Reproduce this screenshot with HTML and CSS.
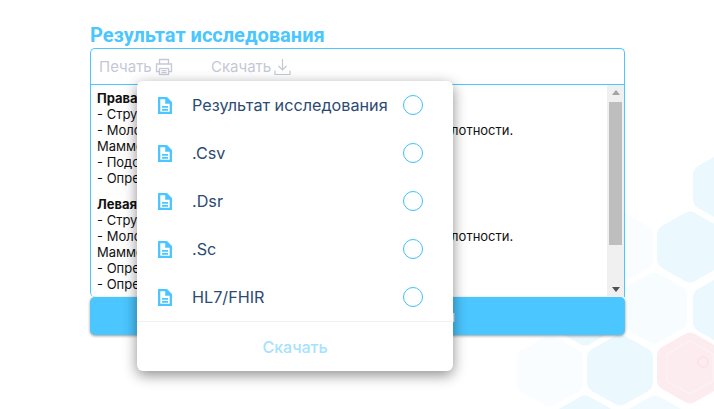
FILE: index.html
```html
<!DOCTYPE html>
<html lang="ru">
<head>
    <meta charset="UTF-8">
    <meta name="viewport" content="width=device-width, initial-scale=1.0">
    <title>Результат исследования</title>
    <link rel="stylesheet" href="styles.css">
</head>
<body>
    <!-- honeycomb in the corner -->
    <svg class="honeycomb" width="714" height="409" viewBox="0 0 714 409">
        <defs>
            <path id="hex" d="M-5 -34 Q0 -37 5 -34 L28 -21 Q33 -18 33 -12 L33 12 Q33 18 28 21 L5 34 Q0 37 -5 34 L-28 21 Q-33 18 -33 12 L-33 -12 Q-33 -18 -28 -21 Z"/>
        </defs>
        <use href="#hex" x="726" y="187" fill="#ebf8fe"/>
        <use href="#hex" x="620" y="247" fill="#f9fdff"/>
        <use href="#hex" x="690" y="247" fill="#ebf8fe"/>
        <use href="#hex" x="585" y="310" fill="#ebf8fe"/>
        <use href="#hex" x="654" y="308" fill="#f7fcff"/>
        <use href="#hex" x="726" y="310" fill="#ebf8fe"/>
        <use href="#hex" x="550" y="371" fill="#f9fdff"/>
        <use href="#hex" x="620" y="370" fill="#ebf8fe"/>
        <use href="#hex" x="690" y="368" fill="#fdecef"/>
        <path d="M690 341 L713 354 L713 381 L690 394 L667 381 L667 354 Z" fill="none" stroke="#fdf0f2" stroke-width="2"/>
        <circle cx="703" cy="362" r="5" fill="none" stroke="#fbe3e6" stroke-width="2"/>
        <use href="#hex" x="585" y="431" fill="#ebf8fe"/>
        <use href="#hex" x="655" y="431" fill="#f1faff"/>
    </svg>

    <div class="page">
        <h1 class="title">Результат исследования</h1>
        <div class="result-box">
            <div class="toolbar">
                <span class="tool tool-print">Печать
                    <svg width="18" height="18" viewBox="0 0 18 18" fill="none" stroke="#c5c8d6" stroke-width="1.3">
                        <path d="M4.5 6V1.500h9V6"/>
                        <path d="M4.5 13.500H1.500V6h15v7.500h-3"/>
                        <rect x="4.5" y="10.5" width="9" height="6"/>
                        <path d="M6.500 12.700h5M6.500 14.600h5"/>
                    </svg>
                </span>
                <span class="tool">Скачать
                    <svg width="17" height="18" viewBox="0 0 17 18" fill="none" stroke="#c5c8d6" stroke-width="1.2">
                        <path d="M8.500 1v11M4.500 8l4 4 4-4"/>
                        <path d="M1 12.500v4h15v-4"/>
                    </svg>
                </span>
            </div>
            <div class="report">
                <div class="report-text">
                    <p><b>Правая молочная железа</b><br>
                    - Структура без особенностей.<br>
                    - Молочная железа представлена тканью умеренной плотности.<br>
                    Маммографически без изменений.<br>
                    - Подозрительных образований нет.<br>
                    - Определяются единичные кальцинаты.</p>
                    <p><b>Левая молочная железа</b><br>
                    - Структура без особенностей.<br>
                    - Молочная железа представлена тканью умеренной плотности.<br>
                    Маммографически без изменений.<br>
                    - Определяются единичные кисты.<br>
                    - Определяются единичные кальцинаты.</p>
                </div>
                <div class="scrollbar">
                    <span class="arrow arrow-up"></span>
                    <div class="track"><div class="thumb"></div></div>
                    <span class="arrow arrow-down"></span>
                </div>
            </div>
        </div>
        <button class="main-btn" type="button">Завершить исследования</button>
    </div>

    <div class="modal">
        <ul class="formats">
            <li class="format">
                <svg class="doc" width="14" height="17" viewBox="0 0 14 17"><path fill-rule="evenodd" fill="#4bc6ff" d="M0 0h9l5 5v12H0ZM2.300 2.300v12.400h9.400V6.800H7.200V2.300ZM4 9h6v1.700H4ZM4 12h6v1.700H4Z"/></svg>
                <span class="format-name">Результат исследования</span>
                <span class="radio"></span>
            </li>
            <li class="format">
                <svg class="doc" width="14" height="17" viewBox="0 0 14 17"><path fill-rule="evenodd" fill="#4bc6ff" d="M0 0h9l5 5v12H0ZM2.300 2.300v12.400h9.400V6.800H7.200V2.300ZM4 9h6v1.700H4ZM4 12h6v1.700H4Z"/></svg>
                <span class="format-name">.Csv</span>
                <span class="radio"></span>
            </li>
            <li class="format">
                <svg class="doc" width="14" height="17" viewBox="0 0 14 17"><path fill-rule="evenodd" fill="#4bc6ff" d="M0 0h9l5 5v12H0ZM2.300 2.300v12.400h9.400V6.800H7.200V2.300ZM4 9h6v1.700H4ZM4 12h6v1.700H4Z"/></svg>
                <span class="format-name">.Dsr</span>
                <span class="radio"></span>
            </li>
            <li class="format">
                <svg class="doc" width="14" height="17" viewBox="0 0 14 17"><path fill-rule="evenodd" fill="#4bc6ff" d="M0 0h9l5 5v12H0ZM2.300 2.300v12.400h9.400V6.800H7.200V2.300ZM4 9h6v1.700H4ZM4 12h6v1.700H4Z"/></svg>
                <span class="format-name">.Sc</span>
                <span class="radio"></span>
            </li>
            <li class="format">
                <svg class="doc" width="14" height="17" viewBox="0 0 14 17"><path fill-rule="evenodd" fill="#4bc6ff" d="M0 0h9l5 5v12H0ZM2.300 2.300v12.400h9.400V6.800H7.200V2.300ZM4 9h6v1.700H4ZM4 12h6v1.700H4Z"/></svg>
                <span class="format-name">HL7/FHIR</span>
                <span class="radio"></span>
            </li>
        </ul>
        <div class="modal-footer">Скачать</div>
    </div>
</body>
</html>
```

FILE: styles.css
```css
html, body {
    height: 100%;
}
body {
    font-family: Roboto, sans-serif;
    margin: 0;
    padding: 0;
    background-color: #fff;
    overflow: hidden;
}
.honeycomb {
    position: absolute;
    top: 0;
    left: 0;
}
.page {
    position: relative;
    width: 535px;
    margin-left: 90px;
    padding-top: 24px;
}
.title {
    margin: 0;
    font-size: 20px;
    line-height: 22px;
    font-weight: 700;
    color: #4bc6ff;
    padding-bottom: 2px;
}
.result-box {
    height: 249px;
    background-color: #fff;
    border: 1px solid #4bc6ff;
    border-bottom: 0;
    border-radius: 5px 5px 0 5px;
    box-sizing: border-box;
    display: flex;
    flex-direction: column;
}
.toolbar {
    height: 35px;
    flex: none;
    display: flex;
    align-items: center;
    padding-left: 8px;
    border-bottom: 1px solid #4bc6ff;
}
.tool {
    display: flex;
    align-items: center;
    gap: 3px;
    font-family: Inter, sans-serif;
    font-size: 15px;
    color: #c5c8d6;
}
.tool-print {
    width: 112px;
}
.report {
    flex: 1;
    display: flex;
    min-height: 0;
}
.report-text {
    flex: 1;
    padding: 5px 6px;
    font-family: Inter, sans-serif;
    font-size: 13px;
    line-height: 16px;
    color: #111;
    white-space: nowrap;
    overflow: hidden;
}
.report-text p {
    margin: 0 0 10px;
}
.scrollbar {
    width: 17px;
    flex: none;
    background-color: #f0f0f0;
    display: flex;
    flex-direction: column;
    align-items: center;
}
.track {
    flex: 1;
    width: 100%;
    padding: 2px 2px 0;
    box-sizing: border-box;
}
.thumb {
    height: 143px;
    background-color: #bebebe;
}
.arrow {
    flex: none;
    width: 0;
    height: 0;
    margin: 5px 0;
    border-left: 4px solid transparent;
    border-right: 4px solid transparent;
}
.arrow-up {
    border-bottom: 5px solid #a3a3a3;
}
.arrow-down {
    border-top: 5px solid #505050;
}
.main-btn {
    display: block;
    width: 100%;
    height: 38px;
    background-color: #4bc6ff;
    color: #fff;
    font-family: Roboto, sans-serif;
    font-size: 16px;
    font-weight: 500;
    border: none;
    border-radius: 5px;
    box-shadow: 0 1px 3px rgba(0, 0, 0, 0.4);
}
.modal {
    position: absolute;
    top: 81px;
    left: 137px;
    width: 316px;
    height: 290px;
    background-color: #fff;
    border-radius: 6px;
    box-shadow: 0 4px 14px rgba(0, 0, 0, 0.45);
    display: flex;
    flex-direction: column;
}
.formats {
    list-style: none;
    margin: 0;
    padding: 0;
    border-bottom: 1px solid #eef0f2;
}
.format {
    height: 48px;
    display: flex;
    align-items: center;
    padding-left: 21px;
}
.doc {
    flex: none;
}
.format-name {
    flex: 1;
    margin-left: 20px;
    font-family: Inter, sans-serif;
    font-size: 16.2px;
    color: #2c4a72;
}
.radio {
    flex: none;
    width: 20px;
    height: 20px;
    margin-right: 30px;
    border: 1.5px solid #3dc0ff;
    border-radius: 50%;
    box-sizing: border-box;
}
.modal-footer {
    flex: 1;
    display: flex;
    align-items: center;
    justify-content: center;
    font-family: Inter, sans-serif;
    font-size: 16px;
    font-weight: 500;
    color: #a5e2ff;
}
```
